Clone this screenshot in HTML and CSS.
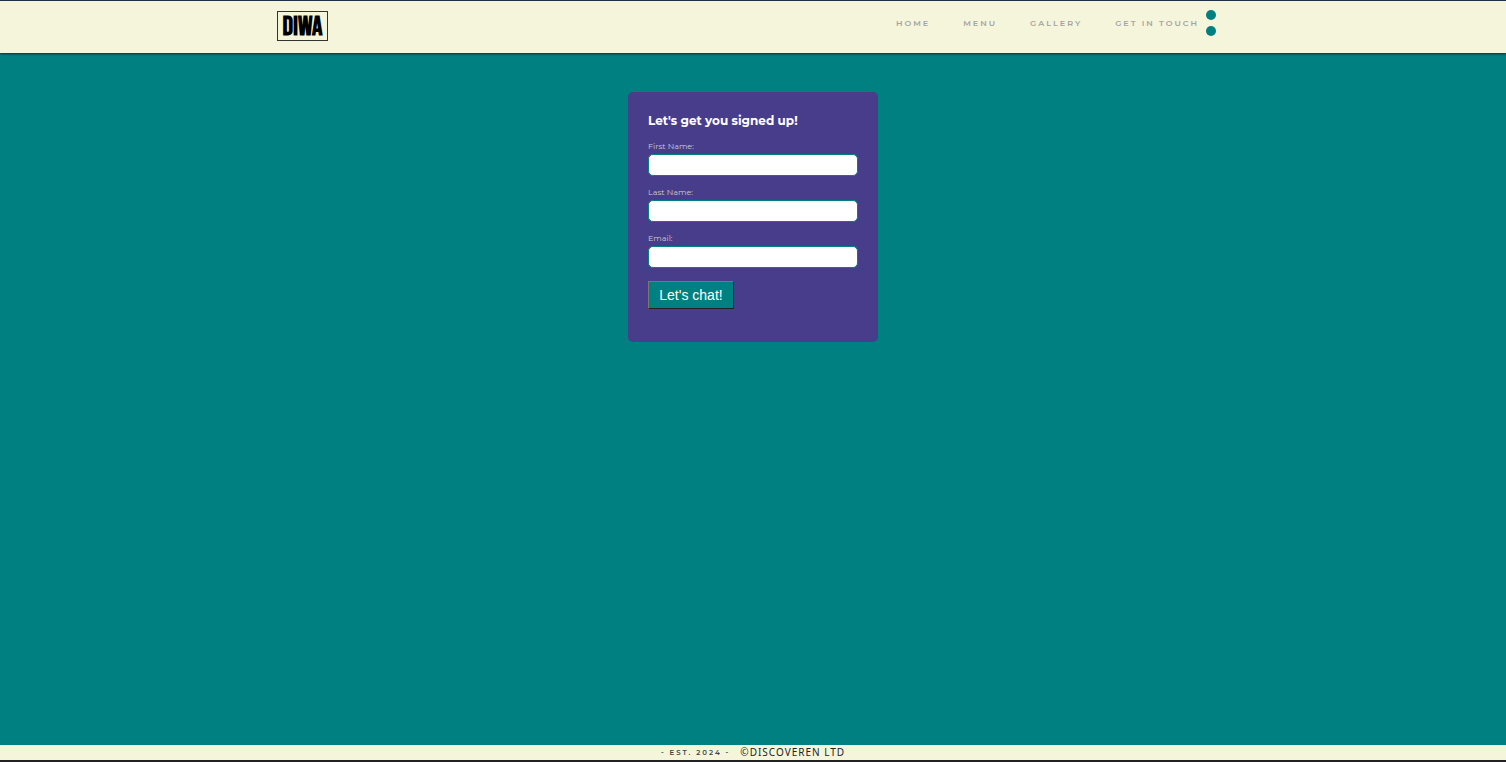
FILE: index.html
```html
<!DOCTYPE html>
<html lang="en">
<head>
<meta charset="utf-8">
<meta name="viewport" content="width=device-width, initial-scale=1">
<title>DIWA - Get in touch</title>
<link rel="stylesheet" href="styles.css">
</head>
<body>
<header class="header">
  <div class="header-inner">
    <a class="logo" href="#">DIWA</a>
    <div class="header-right">
      <nav class="nav">
        <a href="#">HOME</a>
        <a href="#">MENU</a>
        <a href="#">GALLERY</a>
        <a href="#">GET IN TOUCH</a>
      </nav>
      <div class="dots"><span class="dot"></span><span class="dot"></span></div>
    </div>
  </div>
</header>
<main class="main">
  <form class="card">
    <h1 class="title">Let's get you signed up!</h1>
    <div class="field">
      <label for="first">First Name:</label>
      <input id="first" type="text">
    </div>
    <div class="field">
      <label for="last">Last Name:</label>
      <input id="last" type="text">
    </div>
    <div class="field">
      <label for="email">Email:</label>
      <input id="email" type="email">
    </div>
    <button class="submit" type="submit">Let's chat!</button>
  </form>
</main>
<footer class="footer">
  <span class="est">- EST. 2024 -</span>
  <span class="company">©DISCOVEREN LTD</span>
</footer>
</body>
</html>
```
FILE: styles.css
```css
* { box-sizing: border-box; }
body {
  margin: 0;
  min-height: 100vh;
  display: flex;
  flex-direction: column;
  background: teal;
  font-family: Montserrat, Inter, sans-serif;
}
.header {
  background: beige;
  border-top: 1px solid #1c3144;
  box-shadow: 0 1px 2px #222;
}
.header-inner {
  max-width: 952px;
  margin: 0 auto;
  padding: 9px 13px 12px 0;
  display: flex;
  justify-content: space-between;
  align-items: flex-start;
}
.logo {
  width: 51px;
  height: 30px;
  margin-top: 1px;
  padding-top: 3px;
  border: 1px solid #333;
  display: flex;
  align-items: center;
  justify-content: center;
  font-family: "Bebas Neue", "Liberation Sans Narrow", "Liberation Sans", sans-serif;
  font-size: 26px;
  font-weight: 700;
  line-height: 28px;
  color: #000;
  text-decoration: none;
}
.header-right { display: flex; gap: 7px; }
.nav { display: flex; gap: 33px; }
.nav a {
  font-size: 8px;
  font-weight: 600;
  line-height: 26px;
  letter-spacing: 2px;
  color: #a4a4a4;
  text-decoration: none;
}
.dots { display: flex; flex-direction: column; gap: 6px; }
.dot {
  width: 10px;
  height: 10px;
  border-radius: 50%;
  background: teal;
}
.main { flex: 1; padding: 39px 20px; }
.card {
  width: 100%;
  max-width: 250px;
  min-height: 250px;
  margin: 0 auto;
  padding: 20px;
  border-radius: 5px;
  background: darkslateblue;
}
.title {
  margin: 0 0 10px;
  font-size: 12px;
  font-weight: 700;
  line-height: 18px;
  color: #fff;
}
.field { margin-bottom: 10px; }
.field label {
  display: block;
  font-size: 8px;
  line-height: 12px;
  margin-bottom: 2px;
  color: #ccc;
}
.field input {
  display: block;
  width: 100%;
  height: 22px;
  padding: 0 6px;
  border: 1px solid teal;
  border-radius: 5px;
  background: #fff;
  font-size: 12px;
}
.submit {
  display: block;
  margin-top: 13px;
  width: 86px;
  height: 28px;
  padding: 0;
  border: 1px solid;
  border-color: #777 #222 #222 #777;
  background: teal;
  color: #fff;
  font-family: "Liberation Sans", Arial, sans-serif;
  font-size: 14px;
}
.footer {
  display: flex;
  justify-content: center;
  align-items: center;
  gap: 10px;
  height: 17px;
  background: beige;
  border-bottom: 2px solid #222;
}
.est {
  font-size: 7px;
  font-weight: 600;
  line-height: 15px;
  letter-spacing: 2px;
  color: #444;
}
.company {
  font-family: "Noto Sans", sans-serif;
  font-size: 10px;
  line-height: 15px;
  letter-spacing: 1px;
  color: #222;
}
```
